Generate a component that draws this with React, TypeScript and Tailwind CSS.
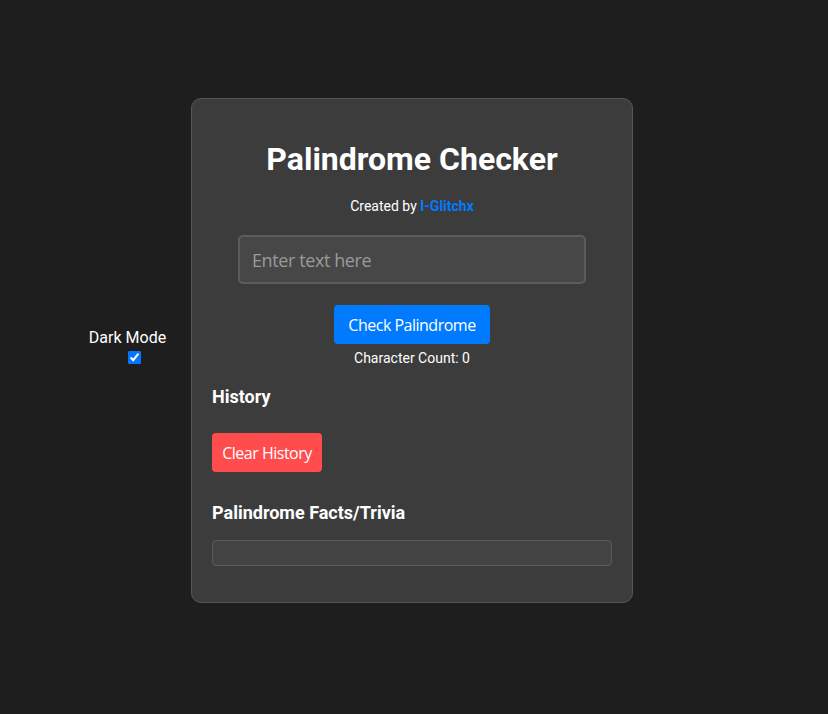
import { useState } from "react";

export default function App() {
  const [text, setText] = useState("");
  const [dark, setDark] = useState(true);

  return (
    <div className="min-h-[714px] bg-[#1e1e1e] flex items-start pt-[98px] pl-[89px] font-['Roboto',sans-serif] text-white">
      <div className="flex flex-col items-center w-[77px] mt-[231px] text-[16px] leading-[18px] whitespace-nowrap">
        <span>Dark Mode</span>
        <input
          type="checkbox"
          checked={dark}
          onChange={(e) => setDark(e.target.checked)}
          className="mt-[4px] ml-[13px] w-[13px] h-[13px] accent-[#0075ff]"
        />
      </div>

      <div className="ml-[25px] w-[442px] h-[505px] bg-[#3c3c3c] border border-[#555] rounded-[10px] px-[20px] pt-[40px] flex flex-col">
        <h1 className="text-center text-[32px] font-bold leading-[40px]">Palindrome Checker</h1>
        <p className="text-center text-[14px] mt-[19px] leading-[16px]">
          Created by <span className="text-[#007bff] font-bold">I-Glitchx</span>
        </p>
        <input
          value={text}
          onChange={(e) => setText(e.target.value)}
          placeholder="Enter text here"
          className="self-center mt-[21px] w-[348px] h-[49px] bg-[#474747] border-2 border-[#5c5c5c] rounded-[5px] px-[12px] text-[18px] tracking-[-0.4px] text-white placeholder:text-[#9a9a9a] outline-none font-['Open_Sans',sans-serif]"
        />
        <button className="self-center mt-[21px] w-[156px] h-[39px] bg-[#007bff] rounded-[4px] text-[16px] tracking-[-0.5px] font-['Open_Sans',sans-serif]">
          Check Palindrome
        </button>
        <p className="text-center text-[14px] mt-[6px] leading-[16px]">Character Count: {text.length}</p>

        <h2 className="text-[18px] font-bold mt-[20px] leading-[22px]">History</h2>
        <button className="mt-[25px] w-[110px] h-[39px] bg-[#ff4d4d] rounded-[4px] text-[16px] tracking-[-0.5px] font-['Open_Sans',sans-serif]">
          Clear History
        </button>

        <h2 className="text-[18px] font-bold mt-[30px] leading-[22px]">Palindrome Facts/Trivia</h2>
        <div className="mt-[16px] h-[26px] bg-[#444] border border-[#5a5a5a] rounded-[4px]" />
      </div>
    </div>
  );
}
